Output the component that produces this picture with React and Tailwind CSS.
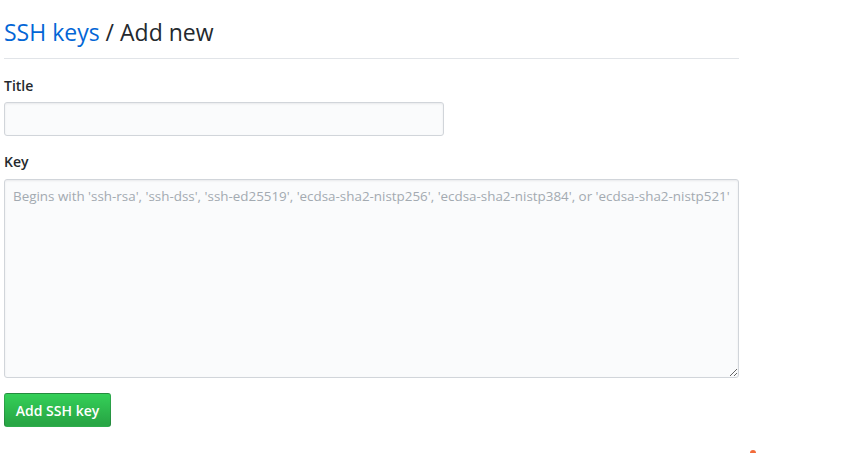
export default function App() {
  return (
    <div className="relative min-h-[453px] bg-white font-['Open_Sans',sans-serif] text-[#24292e]">
      <div className="w-[739px] pl-[4px] pt-[14px]">
        <div className="mb-[16px] border-b border-[#e1e4e8] pb-[8px]">
          <h2 className="text-[23px] font-normal leading-[36px]">
            <a href="#" className="text-[#0366d6]">SSH keys</a> / Add new
          </h2>
        </div>

        <form>
          <div className="mb-[15px]">
            <label className="mb-[6px] block text-[14px] font-semibold leading-[21px]">Title</label>
            <input
              type="text"
              className="h-[34px] w-[440px] rounded-[3px] border border-[#d1d5da] bg-[#fafbfc] px-[8px] text-[14px] shadow-[inset_0_1px_2px_rgba(27,31,35,0.075)] outline-none"
            />
          </div>

          <div className="mb-[15px]">
            <label className="mb-[7px] block text-[14px] font-semibold leading-[21px]">Key</label>
            <textarea
              placeholder="Begins with 'ssh-rsa', 'ssh-dss', 'ssh-ed25519', 'ecdsa-sha2-nistp256', 'ecdsa-sha2-nistp384', or 'ecdsa-sha2-nistp521'"
              className="block h-[199px] w-full rounded-[3px] border border-[#d1d5da] bg-[#fafbfc] px-[8px] py-[6px] text-[13.4px] leading-[20px] shadow-[inset_0_1px_2px_rgba(27,31,35,0.075)] outline-none placeholder:text-[#a3aab1]"
            />
          </div>

          <button
            type="button"
            className="h-[34px] w-[107px] rounded-[3px] border border-[rgba(27,31,35,0.2)] bg-[linear-gradient(-180deg,#34d058_0%,#28a745_90%)] text-[14px] font-semibold text-white"
          >
            Add SSH key
          </button>
        </form>
      </div>
      <span className="absolute left-[750px] top-[450px] h-[3px] w-[6px] rounded-t-full bg-[#f26b3a]" />
    </div>
  );
}
